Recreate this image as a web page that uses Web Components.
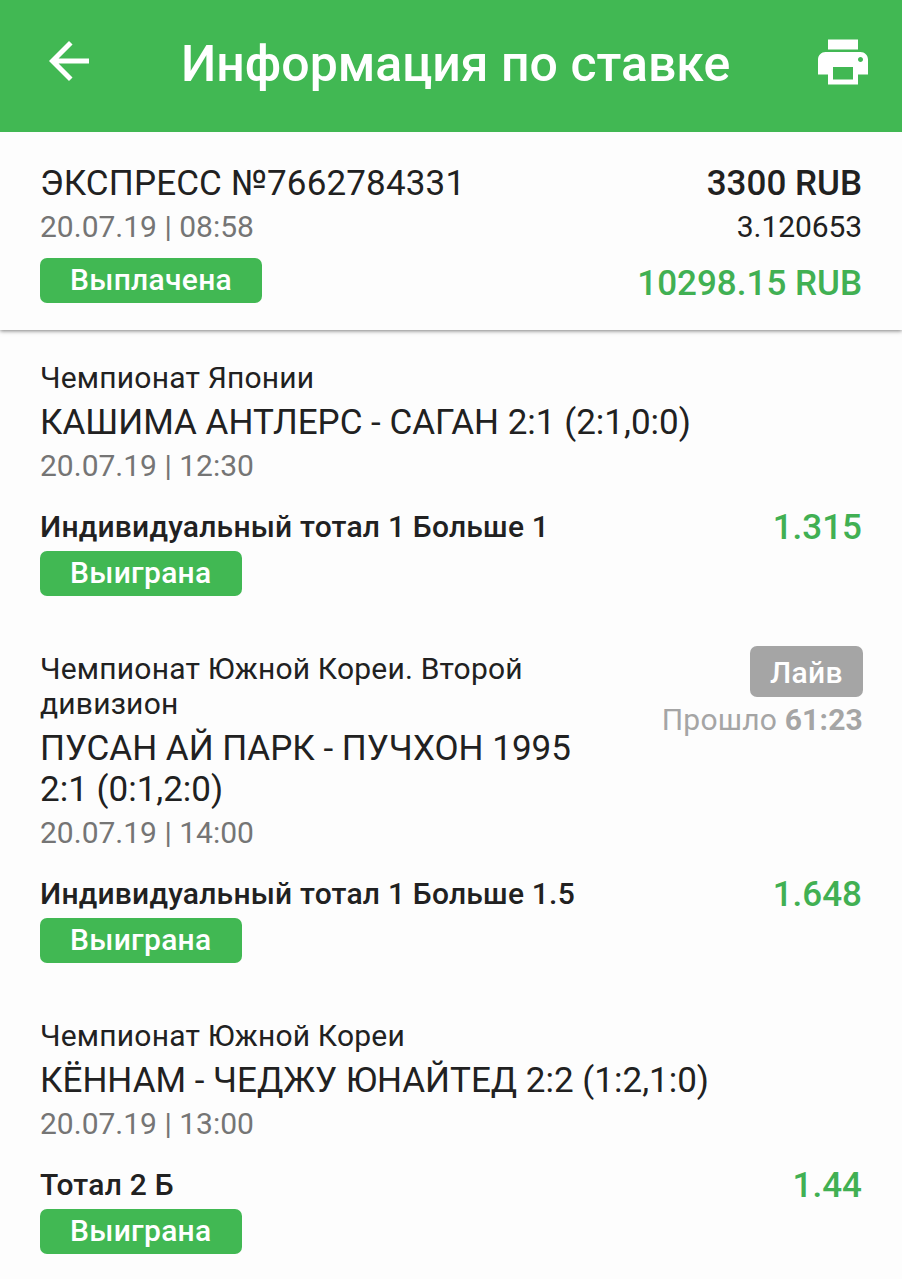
<!DOCTYPE html>
<html lang="ru">
<head>
<meta charset="utf-8">
<title>Информация по ставке</title>
<style>
html, body { margin: 0; }
body { width: 902px; height: 1279px; overflow: hidden; background: #fdfdfd; color: #212121; font-family: Roboto, "Noto Sans", sans-serif; }
</style>
</head>
<body>
<bet-screen></bet-screen>
<script>
const define = (name, html) => customElements.define(name, class extends HTMLElement {
  constructor() {
    super();
    const t = document.createElement('template');
    t.innerHTML = html;
    this.attachShadow({ mode: 'open' }).append(t.content.cloneNode(true));
  }
});

define('app-bar', `
<style>
:host { display: flex; align-items: flex-start; position: relative; z-index: 1; height: 132px; box-sizing: border-box; padding: 31px 29px 0 39px; background: #41b853; color: #fff; }
svg { display: block; width: 60px; height: 60px; fill: currentColor; flex: none; }
.print { margin-top: .5px; }
h1 { flex: 1; margin: 4px 0 0; text-align: left; padding-left: 82px; font-size: 50px; font-weight: 500; line-height: 59px; white-space: nowrap; }
</style>
<svg viewBox="0 0 24 24"><path d="M20 11H7.83l5.59-5.59L12 4l-8 8 8 8 1.41-1.41L7.83 13H20v-2z"/></svg>
<h1><slot></slot></h1>
<svg class="print" viewBox="0 0 24 24"><path d="M19 8H5c-1.66 0-3 1.34-3 3v6h4v4h12v-4h4v-6c0-1.66-1.34-3-3-3zm-3 11H8v-5h8v5zm3-7c-.55 0-1-.45-1-1s.45-1 1-1 1 .45 1 1-.45 1-1 1zm-1-9H6v4h12V3z"/></svg>`);

define('status-badge', `
<style>
:host { display: block; width: fit-content; height: 45px; box-sizing: border-box; padding: 0 30px; border-radius: 7px; background: #41b853; color: #fff; font-size: 30px; font-weight: 500; line-height: 44px; white-space: nowrap; letter-spacing: .3px; }
:host([live]) { height: 51px; padding: 0 20px; line-height: 54px; background: #a5a5a5; letter-spacing: .36px; }
</style><slot></slot>`);

define('bet-summary', `
<style>
:host { display: flex; justify-content: space-between; height: 198px; box-sizing: border-box; padding: 31px 40px 0; background: #fdfdfd; box-shadow: 0 1px 4px rgba(0,0,0,.5); white-space: nowrap; }
.number { font-size: 35px; line-height: 41px; letter-spacing: .15px; }
.date { font-size: 30px; line-height: 35px; color: #757575; margin: 5px 0 14px; }
.right { text-align: right; }
.stake { font-size: 35px; line-height: 41px; font-weight: 500; }
.odds { font-size: 30px; line-height: 35px; margin: 5px 0 19px; letter-spacing: -.1px; }
.payout { font-size: 35px; line-height: 41px; font-weight: 500; color: #41b053; }
</style>
<div>
  <div class="number"><slot name="number"></slot></div>
  <div class="date"><slot name="date"></slot></div>
  <slot name="status"></slot>
</div>
<div class="right">
  <div class="stake"><slot name="stake"></slot></div>
  <div class="odds"><slot name="odds"></slot></div>
  <div class="payout"><slot name="payout"></slot></div>
</div>`);

define('bet-event', `
<style>
:host { display: block; }
.top, .pick { display: flex; justify-content: space-between; }
.league, .date { font-size: 30px; line-height: 35px; }
.league { letter-spacing: .2px; }
.match { font-size: 35px; line-height: 41px; margin: 7px 0 5px; }
.date { color: #757575; }
.pick { height: 35px; margin: 26px 0 7px; white-space: nowrap; }
.market { font-size: 30px; line-height: 35px; font-weight: 500; letter-spacing: .22px; }
.odds { font-size: 35px; line-height: 37px; font-weight: 500; color: #41b053; }
.side { display: flex; flex-direction: column; align-items: flex-end; margin: -5px -1px 0 0; height: 0; flex: none; }
</style>
<div class="top">
  <div>
    <div class="league"><slot name="league"></slot></div>
    <div class="match"><slot name="match"></slot></div>
    <div class="date"><slot name="date"></slot></div>
  </div>
  <div class="side"><slot name="side"></slot></div>
</div>
<div class="pick">
  <div class="market"><slot name="market"></slot></div>
  <div class="odds"><slot name="odds"></slot></div>
</div>
<slot name="status"></slot>`);

define('elapsed-time', `
<style>
:host { display: block; margin-top: 5px; font-size: 30px; line-height: 35px; color: #a5a5a5; white-space: nowrap; letter-spacing: .2px; }
b { font-weight: 700; }
</style>Прошло <b><slot></slot></b>`);

define('bet-screen', `
<style>
:host { display: block; }
main { display: flex; flex-direction: column; gap: 55px; padding: 30px 40px 0; }
</style>
<app-bar>Информация по ставке</app-bar>
<bet-summary>
  <span slot="number">ЭКСПРЕСС №7662784331</span>
  <span slot="date">20.07.19 | 08:58</span>
  <status-badge slot="status">Выплачена</status-badge>
  <span slot="stake">3300 RUB</span>
  <span slot="odds">3.120653</span>
  <span slot="payout">10298.15 RUB</span>
</bet-summary>
<main>
  <bet-event>
    <span slot="league">Чемпионат Японии</span>
    <span slot="match">КАШИМА АНТЛЕРС - САГАН 2:1 (2:1,0:0)</span>
    <span slot="date">20.07.19 | 12:30</span>
    <span slot="market">Индивидуальный тотал 1 Больше 1</span>
    <span slot="odds">1.315</span>
    <status-badge slot="status">Выиграна</status-badge>
  </bet-event>
  <bet-event>
    <span slot="league">Чемпионат Южной Кореи. Второй<br>дивизион</span>
    <span slot="match">ПУСАН АЙ ПАРК - ПУЧХОН 1995<br>2:1 (0:1,2:0)</span>
    <span slot="date">20.07.19 | 14:00</span>
    <status-badge slot="side" live>Лайв</status-badge>
    <elapsed-time slot="side">61:23</elapsed-time>
    <span slot="market">Индивидуальный тотал 1 Больше 1.5</span>
    <span slot="odds">1.648</span>
    <status-badge slot="status">Выиграна</status-badge>
  </bet-event>
  <bet-event>
    <span slot="league">Чемпионат Южной Кореи</span>
    <span slot="match">КЁННАМ - ЧЕДЖУ ЮНАЙТЕД 2:2 (1:2,1:0)</span>
    <span slot="date">20.07.19 | 13:00</span>
    <span slot="market">Тотал 2 Б</span>
    <span slot="odds">1.44</span>
    <status-badge slot="status">Выиграна</status-badge>
  </bet-event>
</main>`);
</script>
</body>
</html>
